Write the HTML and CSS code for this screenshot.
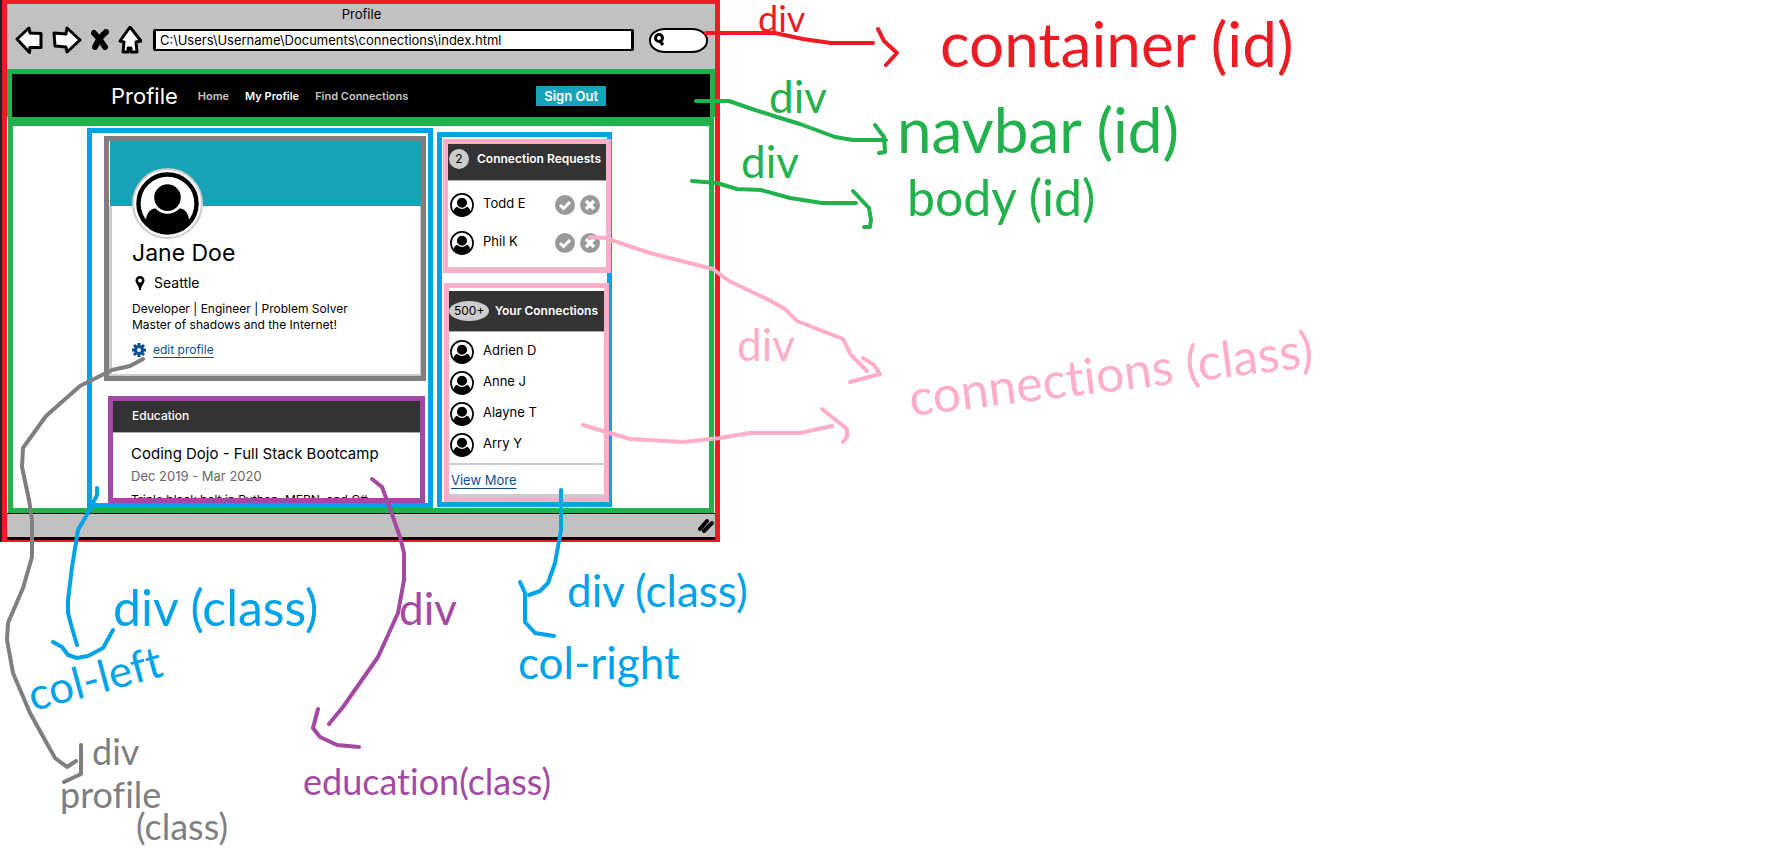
FILE: index.html
```html
<!DOCTYPE html>
<html lang="en">
<head>
<meta charset="utf-8">
<title>Profile</title>
<link rel="stylesheet" href="styles.css">
</head>
<body>
<svg class="symbols" aria-hidden="true">
  <symbol id="person" viewBox="0 0 64 64">
    <circle cx="32" cy="32" r="29.500" fill="#fff" stroke="#000" stroke-width="4.500"/>
    <path d="M10 49C11 40 16 36 23 37H41C48 36 53 40 54 49Q46 62 32 62T10 49Z"/>
    <circle cx="32" cy="26" r="15" stroke="#fff" stroke-width="3"/>
  </symbol>
  <symbol id="check" viewBox="0 0 20 20">
    <circle cx="10" cy="10" r="10" fill="#999"/>
    <path d="M5 10l3.500 3.500L15 7" fill="none" stroke="#fff" stroke-width="3"/>
  </symbol>
  <symbol id="cross" viewBox="0 0 20 20">
    <circle cx="10" cy="10" r="10" fill="#999"/>
    <path d="M6 6l8 8M14 6l-8 8" fill="none" stroke="#fff" stroke-width="3.500"/>
  </symbol>
</svg>
<main class="canvas">
  <div class="window" id="container">
    <header class="chrome">
      <p class="title">Profile</p>
      <div class="toolbar">
        <button class="tool" aria-label="Back"><svg width="28" height="28" viewBox="0 0 28 28"><path d="M2 13L14 2l1 5 11 0.500 0 14-11 0-0.500 5z"/></svg></button>
        <button class="tool" aria-label="Forward"><svg width="30" height="28" viewBox="0 0 30 28"><path d="M2 7l12 1 1-6 13 12-13 12-1-5-11-1z"/></svg></button>
        <button class="tool" aria-label="Stop"><svg width="18" height="22" viewBox="0 0 18 22"><path class="cross-mark" d="M3 4q6 6 11 14M15 3Q8 9 4 18"/></svg></button>
        <button class="tool" aria-label="Home"><svg width="24" height="28" viewBox="0 0 24 28"><path d="M12 1L2 15l4 1-1 10h5v-4h3v4h6l-1-10 5-1z"/></svg></button>
        <input class="address" aria-label="Address" value="C:\Users\Username\Documents\connections\index.html">
        <label class="search">
          <svg width="12" height="14" viewBox="0 0 12 14"><circle cx="6" cy="5" r="3.500"/><path d="M7 8l3 4"/></svg>
          <input aria-label="Search">
        </label>
      </div>
    </header>
    <nav class="navbar" id="navbar">
      <span class="brand">Profile</span>
      <a href="#">Home</a>
      <a href="#" class="current">My Profile</a>
      <a href="#">Find Connections</a>
      <button class="sign-out">Sign Out</button>
    </nav>
    <div class="page" id="body">
      <div class="column col-left">
        <section class="profile">
          <div class="cover"></div>
          <div class="details">
            <div class="photo"><svg><use href="#person"/></svg></div>
            <h1>Jane Doe</h1>
            <p class="place"><svg width="10" height="14" viewBox="0 0 10 14"><path fill-rule="evenodd" d="M5 0a4.500 4.500 0 0 1 4.500 4.500C9.500 8 6 9 6 14H4C4 9 .5 8 .5 4.500A4.500 4.500 0 0 1 5 0zm0 2.500a2 2 0 1 0 0 4 2 2 0 0 0 0-4z"/></svg>Seattle</p>
            <p class="about">Developer | Engineer | Problem Solver<br>Master of shadows and the Internet!</p>
            <p class="edit"><svg width="14" height="14" viewBox="0 0 14 14"><circle cx="7" cy="7" r="3.500" fill="none" stroke="#0b4f94" stroke-width="3"/><path d="M7 0v3M7 11v3M0 7h3M11 7h3M2 2l2 2M10 10l2 2M12 2l-2 2M4 10l-2 2" stroke="#0b4f94" stroke-width="3"/></svg><a href="#">edit profile</a></p>
          </div>
        </section>
        <section class="education">
          <h2>Education</h2>
          <div class="course">
            <h3>Coding Dojo - Full Stack Bootcamp</h3>
            <p class="dates">Dec 2019 - Mar 2020</p>
            <p class="summary">Triple black belt in Python, MERN, and C#</p>
          </div>
        </section>
      </div>
      <div class="column col-right">
        <section class="connections requests">
          <h2><span class="badge">2</span>Connection Requests</h2>
          <ul>
            <li><svg class="face"><use href="#person"/></svg><span>Todd E</span><button aria-label="Accept Todd E"><svg><use href="#check"/></svg></button><button aria-label="Decline Todd E"><svg><use href="#cross"/></svg></button></li>
            <li><svg class="face"><use href="#person"/></svg><span>Phil K</span><button aria-label="Accept Phil K"><svg><use href="#check"/></svg></button><button aria-label="Decline Phil K"><svg><use href="#cross"/></svg></button></li>
          </ul>
        </section>
        <section class="connections people">
          <h2><span class="badge">500+</span>Your Connections</h2>
          <ul>
            <li><svg class="face"><use href="#person"/></svg><span>Adrien D</span></li>
            <li><svg class="face"><use href="#person"/></svg><span>Anne J</span></li>
            <li><svg class="face"><use href="#person"/></svg><span>Alayne T</span></li>
            <li><svg class="face"><use href="#person"/></svg><span>Arry Y</span></li>
          </ul>
          <p class="more"><a href="#">View More</a></p>
        </section>
      </div>
    </div>
    <footer class="status"><svg width="18" height="16" viewBox="0 0 18 16"><path d="M3 11l7-8M7 13l8-8" stroke="#000" stroke-width="4" stroke-linecap="round"/></svg></footer>
  </div>

  <svg class="arrows" aria-hidden="true">
    <g class="red"><path d="M706 33H775L803 39 831 43H873M878 29L884 41 897 53 886 65"/></g>
    <g class="green"><path d="M696 101H729L752 109 777 117 800 124 835 137 853 140H886M875 125L884 137 885 152 879 153M692 181L717 183 737 189 761 190 790 198 822 203H856M853 191L869 208 871 220 870 227H864"/></g>
    <g class="pink"><path d="M590 237L605 238 650 253 713 269 729 281 769 300 785 309 797 321 843 339 851 355 867 371M863 358L874 365 880 374 850 382M583 425L630 439 683 442 720 438 749 433H800L832 426M822 409L847 429 847 437 843 442"/></g>
    <g class="blue"><path d="M97 488V495L89 511 78 530 72 567 68 600V613L72 628 77 645M53 642L62 647 68 655 77 658 88 656 103 648 113 630M561 490V530L555 563 548 583 540 591 529 595M520 582L525 593V622L535 633 554 636"/></g>
    <g class="purple"><path d="M372 479L382 487 393 517 400 537 404 553V580L398 613 378 657 343 707 329 724M318 709L313 728 320 737 337 745 359 747"/></g>
    <g class="grey"><path d="M143 359L130 366 112 370 80 386 46 416 23 448 22 467 29 500 32 520V557L23 588 8 623 7 640 13 673 30 713 55 758 67 767 76 761M81 745V774L64 782"/></g>
  </svg>
  <p class="note small red note-red-div">div</p>
  <p class="note large red note-container">container (id)</p>
  <p class="note green note-nav-div">div</p>
  <p class="note large green note-navbar">navbar (id)</p>
  <p class="note green note-body-div">div</p>
  <p class="note medium green note-body">body (id)</p>
  <p class="note pink note-pink-div">div</p>
  <p class="note medium pink note-connections">connections (class)</p>
  <p class="note medium blue note-left-div">div (class)</p>
  <p class="note blue note-left">col-left</p>
  <p class="note blue note-right-div">div (class)</p>
  <p class="note blue note-right">col-right</p>
  <p class="note purple note-purple-div">div</p>
  <p class="note purple small note-education">education(class)</p>
  <p class="note grey small note-grey-div">div</p>
  <p class="note grey small note-profile">profile</p>
  <p class="note grey small note-class">(class)</p>
</main>
</body>
</html>
```

FILE: styles.css
```css
* { box-sizing: border-box; }
body, h1, h2, h3, p, ul { margin: 0; padding: 0; }
body { background: #fff; color: #000; font: 13px/16px Inter, "Noto Sans", sans-serif; }
button, input { font: inherit; border: 0; padding: 0; background: none; min-width: 0; }
button { cursor: pointer; display: flex; }
h1, h2, h3 { font-weight: 400; }
ul { list-style: none; }
a { color: #0b4f94; }
svg { display: block; flex: none; }
.symbols { position: absolute; width: 0; height: 0; }

.canvas { position: relative; min-height: 100vh; overflow: hidden; padding-left: 2px; }
.window { max-width: 718px; border: solid #ed1c24; border-width: 4px 5px 2px; background: #fff; box-shadow: -2px 0 #222; }

.chrome { background: #c1c1c1; padding: 2px 7px 15px 8px; }
.title { text-align: center; margin-bottom: 4px; }
.toolbar { display: flex; align-items: center; gap: 9px; }
.tool path { fill: #fff; stroke: #000; stroke-width: 3; stroke-linejoin: round; }
.tool .cross-mark { fill: none; stroke-width: 6; stroke-linecap: round; }
.address { flex: 1; height: 22px; border: 2px solid #000; border-width: 2px 3px; border-radius: 2px; background: #fff; padding-left: 4px; margin: 0 6px 0 2px; }
.search { display: flex; align-items: center; width: 59px; height: 25px; padding-left: 2px; border: 2px solid #000; border-radius: 16px / 12px; background: #fff; }
.search input { width: 36px; }
.search svg { fill: none; stroke: #000; stroke-width: 3; }

.navbar { display: flex; align-items: center; gap: 16px; height: 48px; padding: 0 104px 0 99px; background: #000; border: 5px solid #22b14c; border-bottom: 0; }
.brand { color: #fff; font-size: 22px; line-height: 32px; margin-right: 4px; }
.navbar a { color: #c4c4c4; font-size: 11px; font-weight: 600; text-decoration: none; white-space: nowrap; }
.navbar .current { color: #fff; }
.sign-out { margin-left: auto; padding: 2px 8px; background: #18a2b8; color: #fff; font-weight: 600; white-space: nowrap; }

.page { display: flex; align-items: flex-start; gap: 4px; margin: 0 1px; padding: 2px 97px 0 74px; border: 5px solid #22b14c; border-top-width: 9px; }
.column { border: 5px solid #00a2e8; }
.col-left { flex: 1; padding: 3px 2px 0 12px; }
.col-right { flex: none; width: 175px; margin-top: 4px; padding: 2px 0 0 1px; }

.profile { border: 5px solid #7f7f7f; }
.cover { height: 65px; background: #18a2b8; margin-left: 1px; }
.details { display: flow-root; padding: 0 21px 16px 20px; border: solid #ccc; border-width: 0 1px 2px 3px; }
.photo { width: 71px; height: 71px; margin-top: -38px; padding: 2px; border: 2px solid #ccc; border-radius: 50%; background: #fff; position: relative; }
.photo svg { width: 63px; height: 63px; }
h1 { font-size: 23px; line-height: 28px; }
.place, .edit { display: flex; align-items: center; gap: 9px; font-size: 14px; line-height: 16px; }
.place { margin-top: 8px; padding-left: 3px; }
.about { margin-top: 10px; font-size: 12px; white-space: nowrap; }
.edit { margin-top: 9px; gap: 7px; font-size: 12px; }
.edit a, .more a { text-underline-offset: 3px; }

.education { margin: 15px 1px 0 4px; border: 5px solid #a349a4; height: 107px; overflow: hidden; }
.education h2 { padding: 7px 19px 8px; background: #333; color: #fff; font-size: 12px; font-weight: 500; border-bottom: 1px solid #aaa; }
.course { padding: 11px 18px 0; white-space: nowrap; }
.course h3 { font-size: 15px; line-height: 20px; }
.dates { margin-top: 2px; line-height: 20px; color: #666; }
.summary { margin-top: 4px; line-height: 20px; font-size: 12px; }

.connections { border: 5px solid #ffaec9; }
.connections h2 { display: flex; align-items: center; justify-content: space-between; padding: 5px 5px 11px 1px; background: #333; color: #fff; font-size: 12px; line-height: 20px; font-weight: 600; border-bottom: 1px solid #aaa; white-space: nowrap; }
.badge { min-width: 20px; padding: 0 5px; border-radius: 50%; background: #ccc; color: #000; font-weight: 400; text-align: center; }
.requests { width: 168px; }
.people { width: 165px; margin: 10px 0 0 1px; padding-top: 3px; }
.people h2 { padding: 10px 6px 10px 0; }
.connections li { display: flex; align-items: center; gap: 5px; height: 24px; }
.connections li span { flex: 1; padding: 0 0 4px 4px; }
.face { width: 24px; height: 24px; }
li button svg { width: 20px; height: 20px; }
.requests ul { display: grid; gap: 14px; padding: 12px 6px 12px 2px; border-bottom: 1px solid #ccc; }
.people ul { display: grid; gap: 7px; padding: 8px 0 6px 1px; border-bottom: 2px solid #ccc; }
.more { padding: 7px 2px 6px; border-bottom: 3px solid #ccc; line-height: 16px; }

.status { display: flex; justify-content: flex-end; align-items: center; height: 27px; background: #c1c1c1; border: solid #000; border-width: 1px 0 3px; }

/* Hand-drawn annotations laid over the mock-up */
.red { color: #ed1c24; }
.green { color: #22b14c; }
.pink { color: #ffaec9; }
.blue { color: #00a2e8; }
.purple { color: #a349a4; }
.grey { color: #7f7f7f; }
.arrows { position: absolute; left: 0; top: 0; width: 100%; height: 100%; overflow: visible; pointer-events: none; }
.arrows path { fill: none; stroke: currentColor; stroke-width: 4; stroke-linejoin: round; stroke-linecap: round; }
.note { position: absolute; font: 44px/1 Lato, sans-serif; font-variant-ligatures: none; white-space: nowrap; }
.small { font-size: 36px; }
.medium { font-size: 50px; }
.large { font-size: 62px; }
.note-red-div { left: 758px; top: 0; }
.note-container { left: 940px; top: 12px; }
.note-nav-div { left: 769px; top: 74px; }
.note-navbar { left: 897px; top: 98px; }
.note-body-div { left: 741px; top: 139px; }
.note-body { left: 907px; top: 172px; }
.note-pink-div { left: 737px; top: 322px; }
.note-connections { left: 912px; top: 372px; transform: rotate(-7deg); transform-origin: left bottom; }
.note-left-div { left: 113px; top: 582px; }
.note-left { left: 34px; top: 672px; transform: rotate(-15deg); transform-origin: left bottom; }
.note-right-div { left: 567px; top: 568px; }
.note-right { left: 518px; top: 640px; }
.note-purple-div { left: 399px; top: 586px; }
.note-education { left: 303px; top: 763px; }
.note-grey-div { left: 92px; top: 733px; }
.note-profile { left: 60px; top: 776px; }
.note-class { left: 136px; top: 808px; }
```
